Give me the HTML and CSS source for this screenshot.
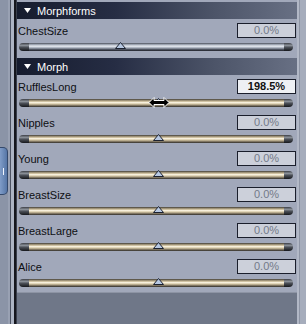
FILE: index.html
```html
<!DOCTYPE html>
<html lang="en">
<head>
    <meta charset="UTF-8">
    <title>Parameters</title>
    <link rel="stylesheet" href="styles.css">
</head>
<body>
    <div class="window">
        <div class="rail">
            <div class="rail-tab"><span></span></div>
        </div>

        <div class="panel">
            <div class="group-head first">
                <svg class="arrow" width="7" height="5" viewBox="0 0 7 5"><polygon points="0,0 7,0 3.5,5" fill="#fff"/></svg>
                Morphforms
            </div>
            <div class="dial">
                <div class="dial-top">
                    <span class="dial-name">ChestSize</span>
                    <span class="dial-value">0.0%</span>
                </div>
                <div class="slider steel">
                    <span class="cap cap-left"></span><span class="track"></span><span class="cap cap-right"></span>
                    <svg class="thumb" style="left: 96px" width="11" height="7" viewBox="0 0 11 7"><polygon points="5.5,0.5 10.5,6.5 0.5,6.5" fill="#b7c8e2" stroke="#1c2230"/></svg>
                </div>
            </div>

            <div class="group-head">
                <svg class="arrow" width="7" height="5" viewBox="0 0 7 5"><polygon points="0,0 7,0 3.5,5" fill="#fff"/></svg>
                Morph
            </div>
            <div class="dial">
                <div class="dial-top">
                    <span class="dial-name">RufflesLong</span>
                    <span class="dial-value active">198.5%</span>
                </div>
                <div class="slider">
                    <span class="cap cap-left"></span><span class="track"></span><span class="cap cap-right"></span>
                    <svg class="thumb" style="left: 134px" width="11" height="7" viewBox="0 0 11 7"><polygon points="5.5,0.5 10.5,6.5 0.5,6.5" fill="#b7c8e2" stroke="#1c2230"/></svg>
                    <svg class="pointer" width="22" height="11" viewBox="0 0 22 11">
                        <path d="M1 5.5 L6 0.5 L6 3.5 L16 3.5 L16 0.5 L21 5.5 L16 10.5 L16 7.5 L6 7.5 L6 10.5 Z" fill="#000" stroke="#fff" stroke-width="1"/>
                    </svg>
                </div>
            </div>
            <div class="dial">
                <div class="dial-top">
                    <span class="dial-name">Nipples</span>
                    <span class="dial-value">0.0%</span>
                </div>
                <div class="slider">
                    <span class="cap cap-left"></span><span class="track"></span><span class="cap cap-right"></span>
                    <svg class="thumb" style="left: 134px" width="11" height="7" viewBox="0 0 11 7"><polygon points="5.5,0.5 10.5,6.5 0.5,6.5" fill="#b7c8e2" stroke="#1c2230"/></svg>
                </div>
            </div>
            <div class="dial">
                <div class="dial-top">
                    <span class="dial-name">Young</span>
                    <span class="dial-value">0.0%</span>
                </div>
                <div class="slider">
                    <span class="cap cap-left"></span><span class="track"></span><span class="cap cap-right"></span>
                    <svg class="thumb" style="left: 134px" width="11" height="7" viewBox="0 0 11 7"><polygon points="5.5,0.5 10.5,6.5 0.5,6.5" fill="#b7c8e2" stroke="#1c2230"/></svg>
                </div>
            </div>
            <div class="dial">
                <div class="dial-top">
                    <span class="dial-name">BreastSize</span>
                    <span class="dial-value">0.0%</span>
                </div>
                <div class="slider">
                    <span class="cap cap-left"></span><span class="track"></span><span class="cap cap-right"></span>
                    <svg class="thumb" style="left: 134px" width="11" height="7" viewBox="0 0 11 7"><polygon points="5.5,0.5 10.5,6.5 0.5,6.5" fill="#b7c8e2" stroke="#1c2230"/></svg>
                </div>
            </div>
            <div class="dial">
                <div class="dial-top">
                    <span class="dial-name">BreastLarge</span>
                    <span class="dial-value">0.0%</span>
                </div>
                <div class="slider">
                    <span class="cap cap-left"></span><span class="track"></span><span class="cap cap-right"></span>
                    <svg class="thumb" style="left: 134px" width="11" height="7" viewBox="0 0 11 7"><polygon points="5.5,0.5 10.5,6.5 0.5,6.5" fill="#b7c8e2" stroke="#1c2230"/></svg>
                </div>
            </div>
            <div class="dial">
                <div class="dial-top">
                    <span class="dial-name">Alice</span>
                    <span class="dial-value">0.0%</span>
                </div>
                <div class="slider">
                    <span class="cap cap-left"></span><span class="track"></span><span class="cap cap-right"></span>
                    <svg class="thumb" style="left: 134px" width="11" height="7" viewBox="0 0 11 7"><polygon points="5.5,0.5 10.5,6.5 0.5,6.5" fill="#b7c8e2" stroke="#1c2230"/></svg>
                </div>
            </div>

            <div class="panel-foot"></div>
        </div>

        <div class="edge"></div>
    </div>
</body>
</html>
```

FILE: styles.css
```css
body {
    margin: 0;
    background-color: #a1a8ba;
    font-family: "Liberation Sans", Arial, sans-serif;
    font-size: 11px;
}
.window {
    display: flex;
    width: 306px;
    height: 324px;
    overflow: hidden;
}
.rail {
    width: 17px;
    flex-shrink: 0;
    background: linear-gradient(to right,
        #8b94a7 0, #8b94a7 8px,
        #99a1b3 8px, #99a1b3 10px,
        #4c5262 10px, #4c5262 11px,
        #adb4c3 11px, #adb4c3 14px,
        #15161d 14px, #15161d 16px,
        #3a3f4c 16px, #3a3f4c 17px);
}
.rail-tab {
    width: 7px;
    height: 46px;
    margin-top: 147px;
    background: linear-gradient(to right, #7f9cc8, #5676a6);
    border: 1px solid #34496c;
    border-left: none;
    border-radius: 0 5px 5px 0;
    display: flex;
    align-items: center;
    justify-content: center;
}
.rail-tab span {
    width: 1px;
    height: 7px;
    background-color: #f2f6ff;
}
.panel {
    width: 280px;
    flex-shrink: 0;
    display: flex;
    flex-direction: column;
}
.group-head {
    height: 17px;
    margin-top: 3px;
    display: flex;
    align-items: center;
    gap: 6px;
    padding-left: 7px;
    color: white;
    background: linear-gradient(to right, #161c2e 0, #262d44 35%, #4c5468 70%, #687084 100%);
}
.group-head.first {
    margin-top: 2px;
}
.dial {
    height: 36px;
    padding-top: 4px;
    box-sizing: border-box;
}
.dial-top {
    height: 15px;
    display: flex;
    align-items: center;
    justify-content: space-between;
}
.dial-name {
    padding-left: 1px;
    color: #0e0f12;
}
.dial-value {
    width: 59px;
    height: 15px;
    box-sizing: border-box;
    margin-right: 1px;
    border: 1px solid #1a1e2b;
    background-color: #ccd0da;
    color: #737a89;
    text-align: center;
    line-height: 13px;
}
.dial-value.active {
    background-color: #eef0f4;
    color: #111;
    font-weight: bold;
}
.slider {
    position: relative;
    height: 14px;
    margin: 2px 4px 0 2px;
    display: flex;
    align-items: center;
}
.track {
    flex: 1;
    height: 8px;
    background: linear-gradient(to bottom,
        #3c3a36 0, #8a7f68 14%, #cbbd9c 30%, #fbf4e2 45%, #d6c8a6 62%, #7d7360 82%, #2b2a28 100%);
}
.cap {
    height: 8px;
    background: linear-gradient(to bottom, #3a3d44 0, #8a9098 30%, #4a4e56 55%, #15171b 100%);
}
.cap-left {
    width: 10px;
    border-radius: 4px 0 0 4px;
}
.cap-right {
    width: 9px;
    border-radius: 0 4px 4px 0;
}
.steel .track {
    background: linear-gradient(to bottom,
        #4a4f5a 0, #9aa1ae 18%, #e9edf3 40%, #a6adba 60%, #4b505c 82%, #1e2028 100%);
}
.thumb {
    position: absolute;
    top: 2px;
}
.pointer {
    position: absolute;
    left: 129px;
    top: 1px;
}
.panel-foot {
    flex: 1;
    margin-top: 1px;
    border-top: 1px solid #8d94a4;
    background-color: #6f7788;
}
.edge {
    flex: 1;
    background: linear-gradient(to right,
        #b2b8c6 0, #b2b8c6 2px,
        #8e95a5 2px, #8e95a5 3px,
        #a6adbc 3px);
}
```
